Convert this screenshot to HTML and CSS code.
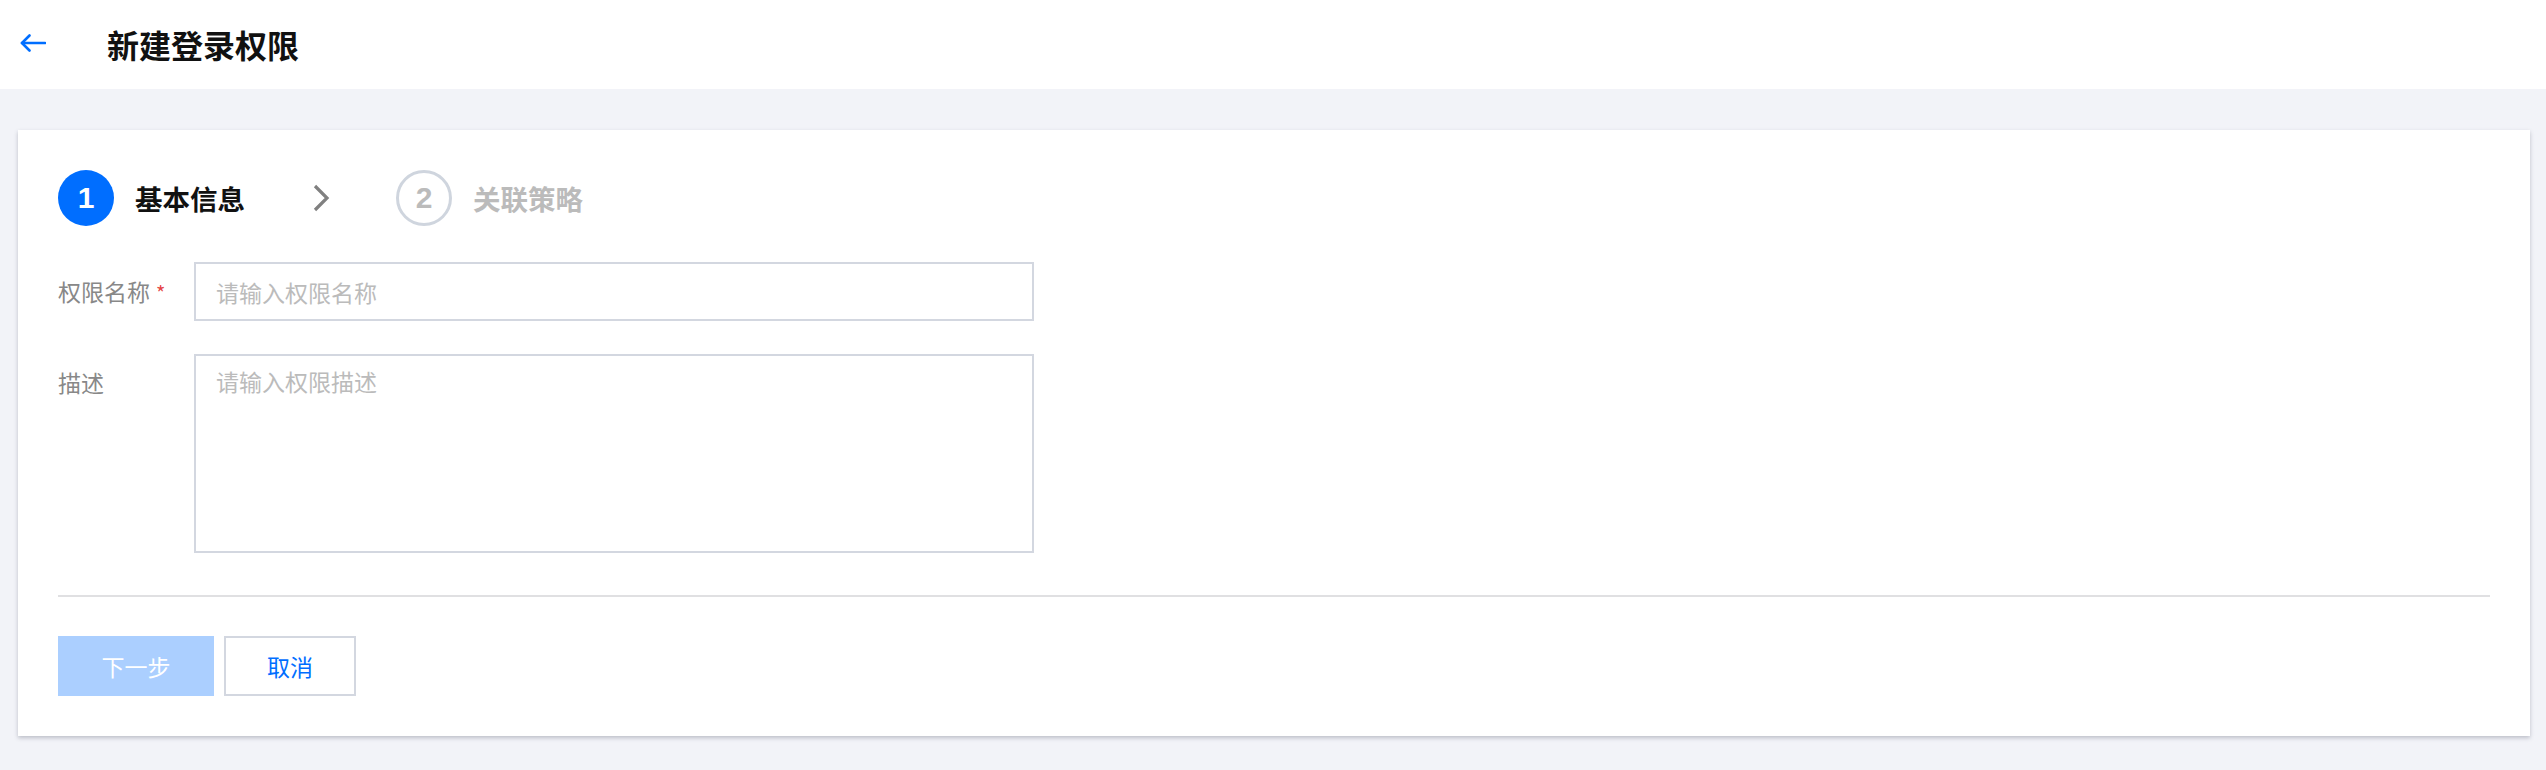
FILE: index.html
```html
<!DOCTYPE html>
<html lang="zh-CN">
<head>
<meta charset="utf-8">
<title>新建登录权限</title>
<link rel="stylesheet" href="styles.css">
</head>
<body>
<header class="topbar">
  <a class="back" href="#" aria-label="返回">
    <svg width="26" height="18" viewBox="0 0 26 18" fill="none" stroke="#006eff" stroke-width="2.6" stroke-linecap="round" stroke-linejoin="round">
      <path d="M25 9H2"/>
      <path d="M9.5 1.5L2 9l7.5 7.5"/>
    </svg>
  </a>
  <h1 class="title">新建登录权限</h1>
</header>
<main class="main">
  <section class="card">
    <div class="steps">
      <div class="step step-active">
        <span class="step-num">1</span>
        <span class="step-text">基本信息</span>
      </div>
      <svg class="step-sep" width="17" height="28" viewBox="0 0 17 28" fill="none" stroke="#808080" stroke-width="3.2">
        <path d="M2 2l12 12L2 26"/>
      </svg>
      <div class="step step-todo">
        <span class="step-num">2</span>
        <span class="step-text">关联策略</span>
      </div>
    </div>
    <form class="form">
      <div class="row">
        <label class="label">权限名称<span class="req">*</span></label>
        <input class="input" type="text" placeholder="请输入权限名称">
      </div>
      <div class="row row-area">
        <label class="label">描述</label>
        <textarea class="textarea" placeholder="请输入权限描述"></textarea>
      </div>
    </form>
    <div class="divider"></div>
    <div class="actions">
      <button class="btn btn-primary" type="button" disabled>下一步</button>
      <button class="btn btn-default" type="button">取消</button>
    </div>
  </section>
</main>
</body>
</html>
```
FILE: styles.css
```css
* { box-sizing: border-box; }
html, body { margin: 0; padding: 0; }
body {
  background: #f2f3f8;
  font-family: "Noto Sans CJK SC", "Noto Sans", sans-serif;
  color: #000;
  height: 770px;
  overflow: hidden;
}
.topbar {
  height: 89px;
  background: #fff;
  display: flex;
  align-items: center;
  padding-left: 20px;
}
.back {
  display: flex;
  align-items: center;
  width: 26px;
  height: 18px;
  margin-top: -3px;
}
.title {
  margin: -2px 0 0 61px;
  font-size: 32px;
  font-weight: 700;
  color: #111;
  line-height: 1;
}
.main {
  padding: 41px 16px 34px 18px;
}
.card {
  background: #fff;
  box-shadow: 0 2px 4px rgba(54, 58, 80, 0.28);
  padding: 40px;
}
.steps {
  display: flex;
  align-items: center;
  height: 56px;
}
.step {
  display: flex;
  align-items: center;
}
.step-num {
  width: 56px;
  height: 56px;
  border-radius: 50%;
  display: flex;
  align-items: center;
  justify-content: center;
  font-family: "Liberation Sans", Arial, sans-serif;
  font-weight: 700;
  font-size: 30px;
}
.step-text {
  margin-left: 21px;
  font-size: 27.5px;
  font-weight: 700;
}
.step-active .step-num { background: #006eff; color: #fff; }
.step-active .step-text { color: #111; }
.step-todo .step-num {
  border: 3px solid #cfd5de;
  color: #bbb;
}
.step-todo .step-text { color: #bbb; }
.step-sep {
  margin: 0 66px 0 68px;
}
.form {
  margin-top: 36px;
}
.row {
  display: flex;
  align-items: center;
}
.row-area {
  margin-top: 33px;
  align-items: flex-start;
}
.label {
  width: 136px;
  flex: none;
  font-size: 23px;
  color: #888;
  line-height: 1;
}
.row-area .label { padding-top: 17px; }
.req {
  color: #e54545;
  margin-left: 6px;
  font-size: 20px;
}
.input, .textarea {
  width: 840px;
  border: 2px solid #d3d7e0;
  font-family: inherit;
  font-size: 23px;
  color: #000;
  padding: 0 20px;
  outline: none;
  background: #fff;
  border-radius: 0;
}
.input { height: 59px; }
.textarea {
  height: 199px;
  padding-top: 8px;
  resize: none;
  line-height: 34px;
}
.input::placeholder, .textarea::placeholder { color: #bbb; }
.divider {
  margin-top: 42px;
  height: 2px;
  background: #e0e0e2;
}
.actions {
  margin-top: 39px;
  display: flex;
  gap: 10px;
}
.btn {
  height: 60px;
  font-family: inherit;
  font-size: 23px;
  border-radius: 0;
  padding: 0;
  cursor: pointer;
}
.btn-primary {
  width: 156px;
  background: #abcfff;
  color: #fff;
  border: none;
}
.btn-default {
  width: 132px;
  background: #fff;
  color: #006eff;
  border: 2px solid #d3d7e0;
}
```
